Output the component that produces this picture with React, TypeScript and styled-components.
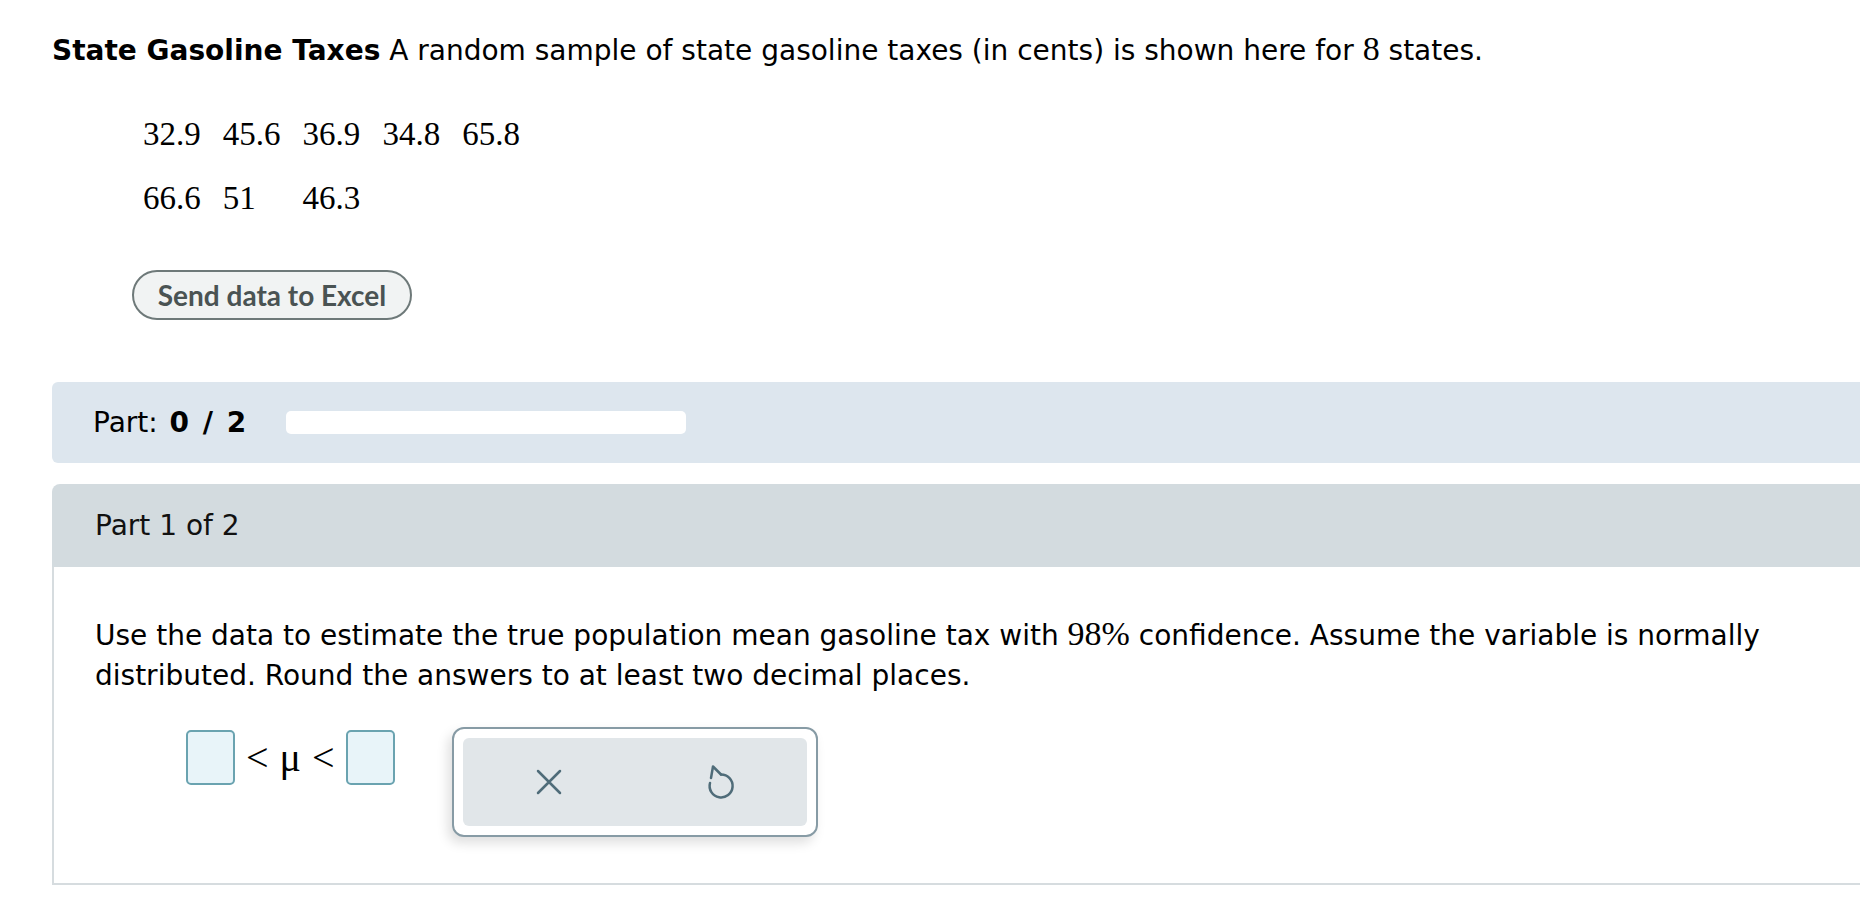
import React from "react";
import styled, { createGlobalStyle } from "styled-components";

const Global = createGlobalStyle`
  html, body { margin: 0; padding: 0; background: #fff; overflow: hidden; }
  body { font-family: "DejaVu Sans", Verdana, sans-serif; color: #000; }
  * { box-sizing: border-box; }
`;

const Page = styled.div`
  width: 1900px;
  padding: 31px 0 0 52px;
`;

const Title = styled.p`
  margin: 0;
  font-size: 28px;
  line-height: 40px;
`;

const Strong = styled.b`
  font-weight: 700;
`;

const Fraction = styled.b`
  font-weight: 700;
  word-spacing: 4px;
`;

const MathNum = styled.span`
  font-family: "Liberation Serif", "Times New Roman", serif;
  font-size: 34px;
  line-height: 1;
`;

const DataGrid = styled.div`
  margin: 31px 0 0 91px;
  display: grid;
  grid-template-columns: repeat(5, 79.8px);
  grid-auto-rows: 64px;
  font-family: "Liberation Serif", "Times New Roman", serif;
  font-size: 33px;
  line-height: 64px;
`;

const ExcelButton = styled.button`
  display: block;
  margin: 40px 0 0 80px;
  width: 280px;
  height: 50px;
  border: 2px solid #6e7979;
  border-radius: 25px;
  background: #f1f3f3;
  color: #4a5353;
  font-family: Lato, "Open Sans", sans-serif;
  font-weight: 700;
  font-size: 28px;
  padding: 0;
`;

const PartBar = styled.div`
  margin-top: 62px;
  height: 81px;
  background: #dde6ee;
  border-radius: 6px 0 0 6px;
  display: flex;
  align-items: center;
  padding-left: 41px;
  font-size: 28px;
  word-spacing: 3px;
`;

const Track = styled.div`
  margin-left: 40px;
  width: 400px;
  height: 23px;
  background: #fff;
  border-radius: 5px;
`;

const PartCard = styled.section`
  margin-top: 21px;
`;

const PartHeader = styled.div`
  height: 83px;
  background: #d3dbdf;
  border-radius: 8px 0 0 0;
  display: flex;
  align-items: center;
  padding-left: 43px;
  font-size: 28px;
  color: #111;
`;

const PartBody = styled.div`
  border-left: 2px solid #d6dcdf;
  border-bottom: 2px solid #d6dcdf;
  padding: 49px 43px 46px 41px;
`;

const Question = styled.p`
  margin: 0;
  font-size: 28px;
  line-height: 40px;
`;

const AnswerRow = styled.div`
  margin-top: 31px;
  padding-left: 91px;
  display: flex;
  align-items: flex-start;
`;

const Inequality = styled.div`
  margin-top: 3px;
  display: flex;
  align-items: center;
  gap: 11px;
  font-family: "Liberation Serif", "Times New Roman", serif;
  font-size: 40px;
  line-height: 55px;
`;

const AnswerBox = styled.span`
  display: block;
  width: 49px;
  height: 55px;
  border: 2px solid #6aa3b0;
  border-radius: 5px;
  background: #e8f4f9;
`;

const Toolbar = styled.div`
  margin-left: 57px;
  width: 366px;
  height: 110px;
  border: 2px solid #879ba5;
  border-radius: 12px;
  padding: 9px;
  background: #fff;
  box-shadow: -4px 6px 12px rgba(0, 0, 0, 0.13);
`;

const ToolInner = styled.div`
  display: flex;
  height: 100%;
  background: #e1e6e9;
  border-radius: 6px;
`;

const ToolButton = styled.div`
  flex: 1;
  display: flex;
  align-items: center;
  justify-content: center;
  color: #4f6c79;
`;

const XIcon = () => (
  <svg width="26" height="26" viewBox="0 0 26 26" fill="none" stroke="currentColor" strokeWidth="2.5" strokeLinecap="round">
    <path d="M2 2 L24 24 M24 2 L2 24" />
  </svg>
);

const UndoIcon = () => (
  <svg width="28" height="36" viewBox="0 0 28 36" fill="none" stroke="currentColor" strokeWidth="2.5" strokeLinecap="round" strokeLinejoin="round">
    <path d="M14 10.5 A11.5 11.5 0 1 1 3 19" />
    <path d="M14 10.5 L6 2.5 L4 14" />
  </svg>
);

export default function App() {
  return (
    <>
      <Global />
      <Page>
        <Title>
          <Strong>State Gasoline Taxes</Strong> A random sample of state gasoline taxes (in cents) is shown here for{" "}
          <MathNum>8</MathNum> states.
        </Title>
        <DataGrid>
          {["32.9", "45.6", "36.9", "34.8", "65.8", "66.6", "51", "46.3"].map((v, i) => (
            <span key={i}>{v}</span>
          ))}
        </DataGrid>
        <ExcelButton>Send data to Excel</ExcelButton>
        <PartBar>
          <span>
            Part: <Fraction>0 / 2</Fraction>
          </span>
          <Track />
        </PartBar>
        <PartCard>
          <PartHeader>Part 1 of 2</PartHeader>
          <PartBody>
            <Question>
              Use the data to estimate the true population mean gasoline tax with <MathNum>98%</MathNum> confidence.
              Assume the variable is normally distributed. Round the answers to at least two decimal places.
            </Question>
            <AnswerRow>
              <Inequality>
                <AnswerBox />
                <span>&lt;</span>
                <span>μ</span>
                <span>&lt;</span>
                <AnswerBox />
              </Inequality>
              <Toolbar>
                <ToolInner>
                  <ToolButton>
                    <XIcon />
                  </ToolButton>
                  <ToolButton>
                    <UndoIcon />
                  </ToolButton>
                </ToolInner>
              </Toolbar>
            </AnswerRow>
          </PartBody>
        </PartCard>
      </Page>
    </>
  );
}
